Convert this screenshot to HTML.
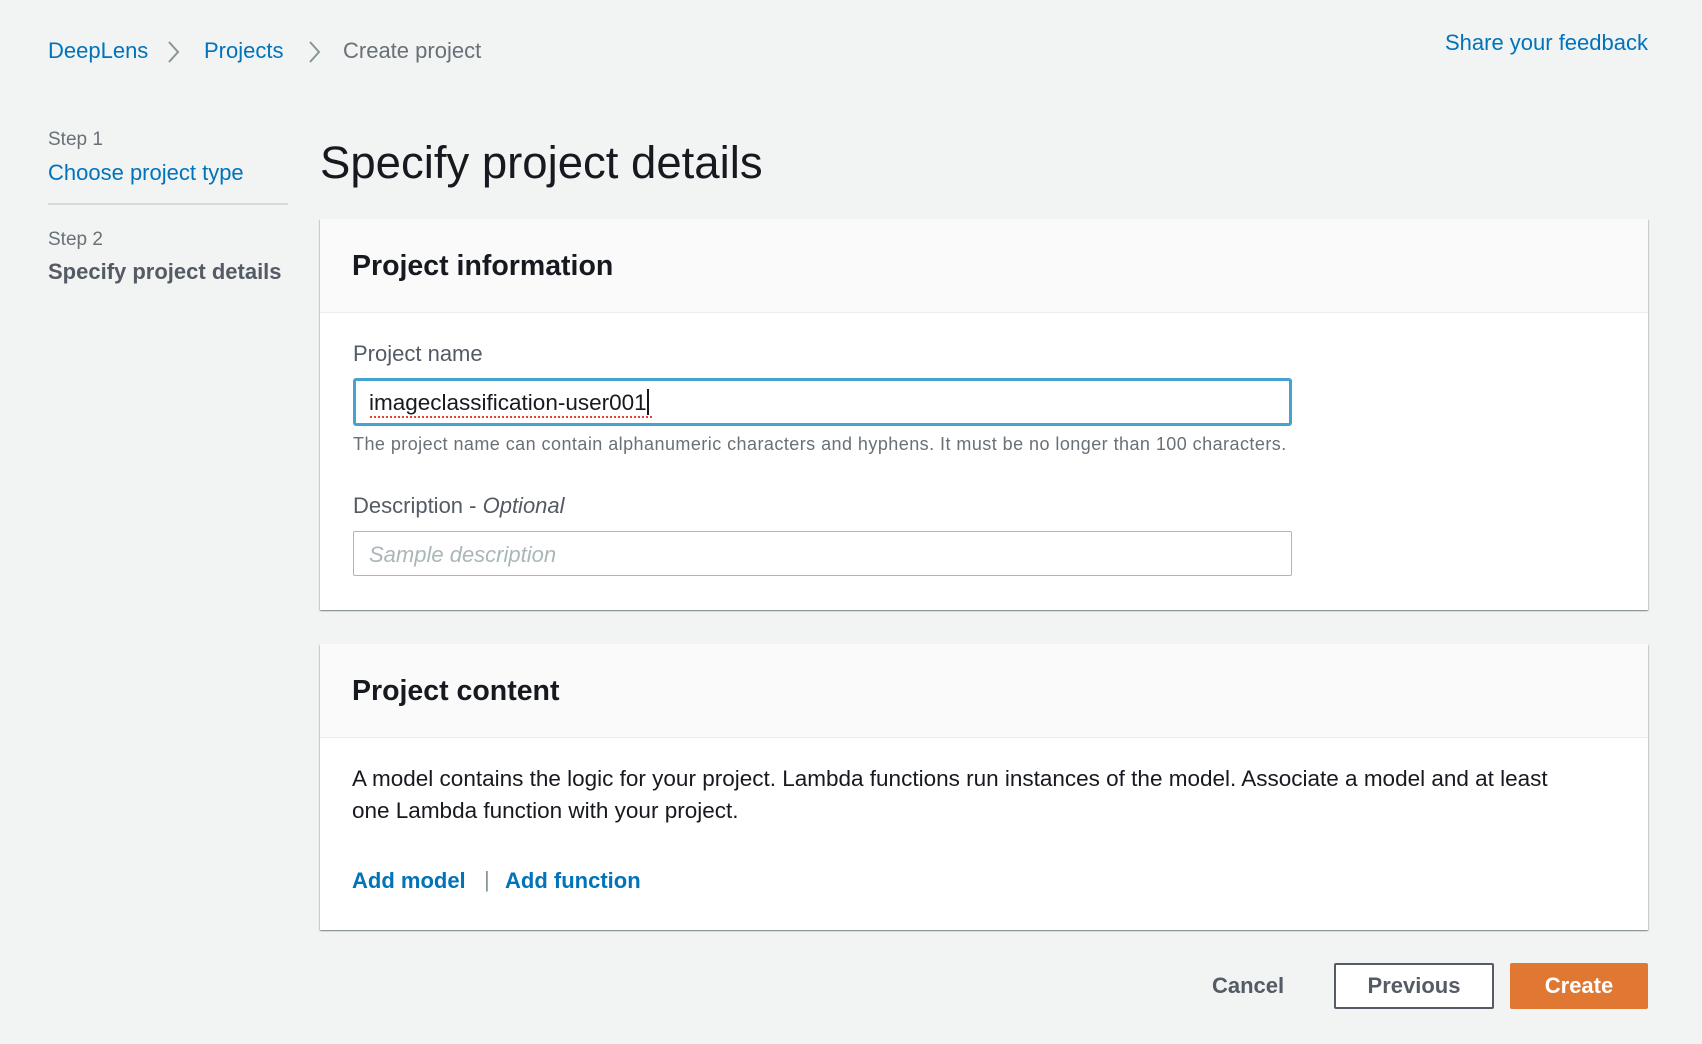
<!DOCTYPE html>
<html><head><meta charset="utf-8"><style>
*{margin:0;padding:0;box-sizing:border-box}
body{width:1702px;height:1044px;background:#f2f3f3;font-family:"Liberation Sans",sans-serif;color:#16191f;position:relative;overflow:hidden}
.a{position:absolute;white-space:nowrap}
.link{color:#0073bb}
.panel{position:absolute;left:320px;width:1328px;background:#fff;box-shadow:0 1px 1px 0 rgba(0,28,36,.3),1px 1px 1px 0 rgba(0,28,36,.15),-1px 1px 1px 0 rgba(0,28,36,.15)}
.ph{background:#fafafa;border-bottom:1px solid #eaeded;position:absolute;left:0;top:0;width:100%}
.ph span{position:absolute;left:32px;font-weight:bold;font-size:28.5px}
.in{position:absolute;left:353px;width:939px;background:#fff}
.btn{position:absolute;top:963px;height:46px;border-radius:2px;font-weight:bold;font-size:21px;display:flex;align-items:center;justify-content:center}
</style></head><body>
<div class="a link" style="left:48px;top:38px;font-size:22px">DeepLens</div>
<svg class="a" style="left:166px;top:40px" width="14" height="24"><path d="M3 2l9 10-9 10" fill="none" stroke="#879596" stroke-width="2"/></svg>
<div class="a link" style="left:204px;top:38px;font-size:22px">Projects</div>
<svg class="a" style="left:307px;top:40px" width="14" height="24"><path d="M3 2l9 10-9 10" fill="none" stroke="#879596" stroke-width="2"/></svg>
<div class="a" style="left:343px;top:38px;font-size:22px;color:#687078">Create project</div>
<div class="a link" style="right:54px;top:30px;font-size:22px">Share your feedback</div>

<div class="a" style="left:48px;top:129px;font-size:19px;color:#687078">Step 1</div>
<div class="a link" style="left:48px;top:160px;font-size:22px">Choose project type</div>
<div class="a" style="left:48px;top:203px;width:240px;height:2px;background:#d5dbdb"></div>
<div class="a" style="left:48px;top:229px;font-size:19px;color:#687078">Step 2</div>
<div class="a" style="left:48px;top:259px;font-size:22px;font-weight:bold;color:#545b64">Specify project details</div>

<div class="a" style="left:320px;top:137px;font-size:45.5px">Specify project details</div>

<div class="panel" style="top:219px;height:391px">
 <div class="ph" style="height:94px"><span style="top:31px">Project information</span></div>
</div>
<div class="a" style="left:353px;top:341px;font-size:22px;color:#545b64">Project name</div>
<div class="in" style="top:378px;height:48px;border:3px solid #44a3cf;border-radius:3px"></div>
<div class="a" style="left:369px;top:389px;font-size:22.5px">imageclassification-user001<span style="display:inline-block;width:2px;height:26px;background:#16191f;vertical-align:-5px"></span></div>
<div class="a" style="left:370px;top:416px;width:282px;border-bottom:2px dotted #e0453a"></div>
<div class="a" style="left:353px;top:434px;font-size:18px;letter-spacing:0.45px;color:#687078">The project name can contain alphanumeric characters and hyphens. It must be no longer than 100 characters.</div>
<div class="a" style="left:353px;top:493px;font-size:22px;color:#545b64">Description - <i>Optional</i></div>
<div class="in" style="top:531px;height:45px;border:1px solid #aab7b8;border-radius:2px"></div>
<div class="a" style="left:369px;top:542px;font-size:22px;color:#aab7b8;font-style:italic">Sample description</div>

<div class="panel" style="top:644px;height:286px">
 <div class="ph" style="height:94px"><span style="top:31px">Project content</span></div>
</div>
<div class="a" style="left:352px;top:763px;font-size:22.5px;line-height:32px;white-space:normal;width:1215px">A model contains the logic for your project. Lambda functions run instances of the model. Associate a model and at least one Lambda function with your project.</div>
<div class="a link" style="left:352px;top:868px;font-size:22px;font-weight:bold">Add model</div>
<div class="a" style="left:484px;top:867px;font-size:22px;color:#879596">|</div>
<div class="a link" style="left:505px;top:868px;font-size:22px;font-weight:bold">Add function</div>

<div class="a" style="left:1212px;top:973px;font-size:22px;font-weight:bold;color:#545b64">Cancel</div>
<div class="btn" style="left:1334px;width:160px;border:2px solid #545b64;background:#fff;color:#545b64;font-size:22px">Previous</div>
<div class="btn" style="left:1510px;width:138px;background:#e07833;color:#fff;font-size:22px">Create</div>
</body></html>
